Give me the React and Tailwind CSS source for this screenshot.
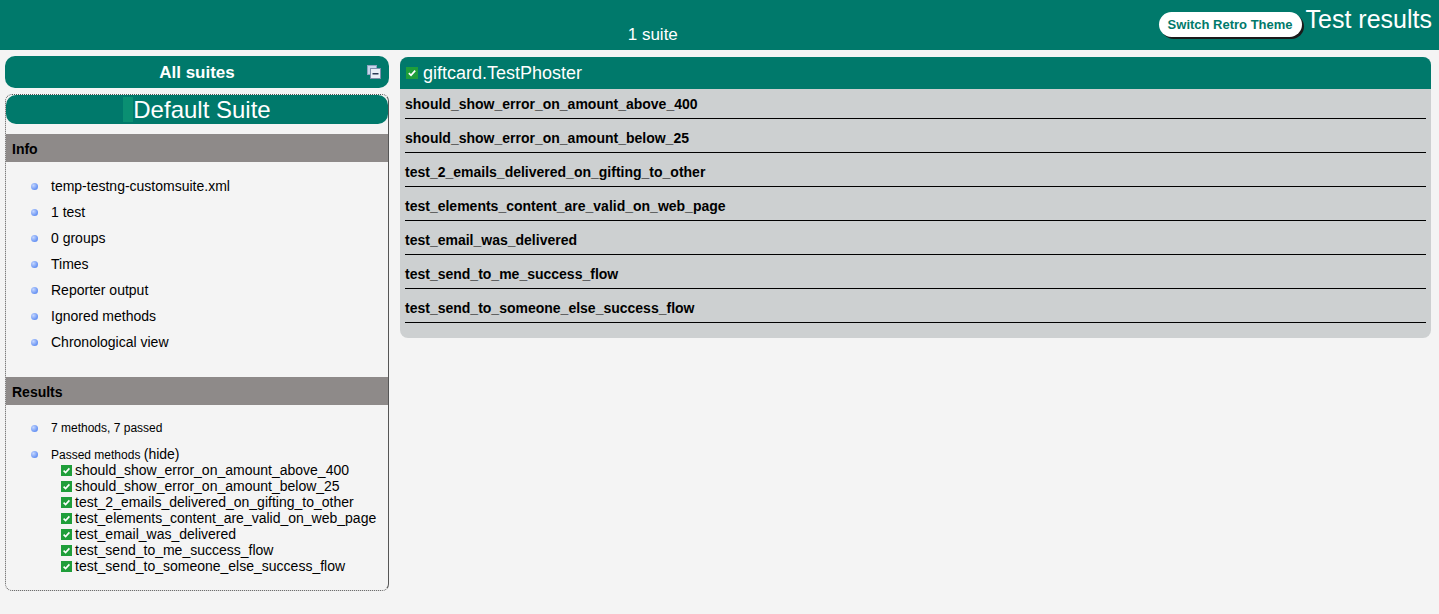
import React from 'react';

const methods = [
  'should_show_error_on_amount_above_400',
  'should_show_error_on_amount_below_25',
  'test_2_emails_delivered_on_gifting_to_other',
  'test_elements_content_are_valid_on_web_page',
  'test_email_was_delivered',
  'test_send_to_me_success_flow',
  'test_send_to_someone_else_success_flow',
];

const infoItems = [
  'temp-testng-customsuite.xml',
  '1 test',
  '0 groups',
  'Times',
  'Reporter output',
  'Ignored methods',
  'Chronological view',
];

// small green passed checkbox
const Check = ({ size = 11 }) => (
  <svg width={size} height={size} viewBox="0 0 11 11" className="shrink-0">
    <rect x="0" y="0" width="11" height="11" fill="#1f9e3a" />
    <path d="M2.6 5.6 L4.6 7.6 L8.4 3.4" stroke="#fff" strokeWidth="1.6" fill="none" />
  </svg>
);

const Bullet = () => (
  <span className="w-[7px] h-[7px] rounded-full bg-[radial-gradient(circle_at_35%_35%,#c4d6ff,#3d74ee)] shrink-0" />
);

const CollapseIcon = () => (
  <svg width="14" height="14" viewBox="0 0 14 14">
    <rect x="0.5" y="0.5" width="9" height="9" fill="#c9d6ea" stroke="#8fa3c0" />
    <rect x="3.5" y="3.5" width="10" height="10" fill="#e9eef7" stroke="#7d8fab" />
    <rect x="5.5" y="8" width="6" height="1.5" fill="#2a3a55" />
  </svg>
);

export default function App() {
  return (
    <div className="min-h-screen bg-[#f4f4f4] font-['Liberation_Sans',Arial,sans-serif] text-black">
      {/* top bar */}
      <div className="h-[50px] bg-[#00796b] flex">
        <div className="flex-1 relative flex justify-center items-end pb-[5px]">
          <span className="text-white text-[17px] leading-[20px]">1 suite</span>
          <button className="absolute right-[4px] top-[12px] h-[25px] px-[9px] bg-white rounded-full text-[#00796b] font-bold text-[13px] shadow-[2px_2px_0_#1a1a1a]">
            Switch Retro Theme
          </button>
        </div>
        <div className="text-white text-[25px] leading-[28px] pt-[5px] pr-[7px]">Test results</div>
      </div>

      <div className="flex gap-[11px] pl-[5px] pr-[8px] pt-[6px] items-start">
        {/* left column */}
        <div className="w-[384px] shrink-0">
          <div className="h-[32px] bg-[#00796b] rounded-[10px] flex items-center justify-center relative pt-[2px]">
            <span className="text-white font-bold text-[17px]">All suites</span>
            <span className="absolute right-[8px] top-[9px] flex">
              <CollapseIcon />
            </span>
          </div>

          <div className="mt-[6px] h-[497px] border border-dotted border-[#555] [border-right-style:solid] rounded-[7px]">
            <div className="h-[29px] bg-[#00796b] rounded-[10px] flex items-center justify-center">
              <span className="w-[10px] h-[25px] bg-[#0a8f72]" />
              <span className="text-white text-[24px] leading-[28px]">Default Suite</span>
            </div>

            <div className="mt-[10px] h-[28px] bg-[#8e8a89] flex items-center pl-[6px] pt-[2px]">
              <span className="font-bold text-[14px]">Info</span>
            </div>
            <ul className="mt-[11px]">
              {infoItems.map((t) => (
                <li key={t} className="h-[26px] flex items-center pl-[25px] gap-[13px] text-[14px]">
                  <Bullet />
                  <span>{t}</span>
                </li>
              ))}
            </ul>

            <div className="mt-[22px] h-[28px] bg-[#8e8a89] flex items-center pl-[6px] pt-[2px]">
              <span className="font-bold text-[14px]">Results</span>
            </div>
            <ul className="mt-[15px]">
              <li className="h-[16px] flex items-center pl-[25px] gap-[13px] text-[12px]">
                <Bullet />
                <span>7 methods, 7 passed</span>
              </li>
              <li className="mt-[10px] pl-[25px]">
                <div className="h-[16px] flex items-center gap-[13px] text-[12px]">
                  <Bullet />
                  <span>
                    Passed methods <span className="text-[14px]">(hide)</span>
                  </span>
                </div>
                <div className="pl-[30px]">
                  {methods.map((m) => (
                    <div key={m} className="h-[16px] flex items-center gap-[3px] text-[14px] leading-[16px]">
                      <Check />
                      <span>{m}</span>
                    </div>
                  ))}
                </div>
              </li>
            </ul>
          </div>
        </div>

        {/* right column */}
        <div className="flex-1 mt-[1px] bg-[#cdd0d1] rounded-[8px] pb-[15px]">
          <div className="h-[32px] bg-[#00796b] rounded-t-[8px] flex items-center pl-[6px] gap-[5px]">
            <Check size={12} />
            <span className="text-white text-[18px] leading-[22px]">giftcard.TestPhoster</span>
          </div>
          <div className="px-[5px]">
            {methods.map((m, i) => (
              <div
                key={m}
                className={`${i === 0 ? 'pt-[7px]' : 'pt-[11px]'} pb-[5px] border-b border-black font-bold text-[14px] leading-[17px]`}
              >
                {m}
              </div>
            ))}
          </div>
        </div>
      </div>
    </div>
  );
}
